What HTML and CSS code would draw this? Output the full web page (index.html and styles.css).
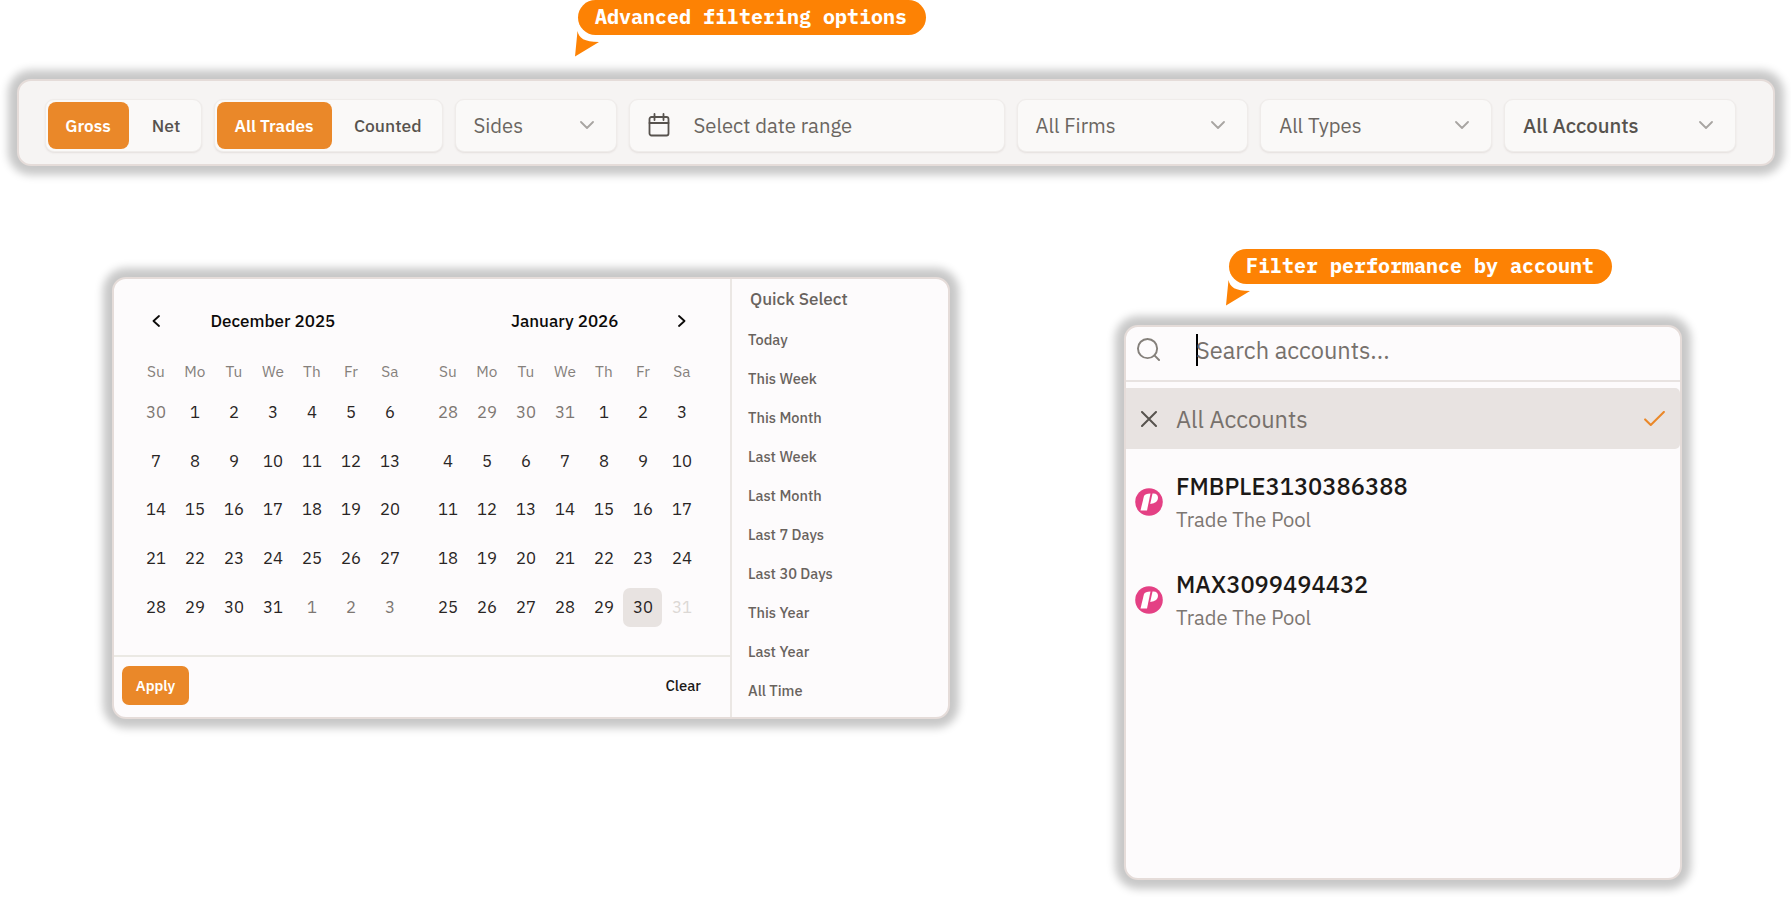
FILE: index.html
```html
<!DOCTYPE html>
<html lang="en">
<head>
    <meta charset="UTF-8">
    <meta name="viewport" content="width=device-width, initial-scale=1.0">
    <title>Trade Filters</title>
    <link rel="stylesheet" href="styles.css">
</head>
<body>
    <div class="callout callout-filters">
        Advanced filtering options
        <svg class="callout-tail" width="24" height="26" viewBox="0 0 24 26"><path d="M2.5 0C4 7 9 11 24 11L0 25.500Z"/></svg>
    </div>

    <!-- Filter bar -->
    <div class="panel filter-bar">
        <div class="toggle toggle-pnl">
            <button class="toggle-btn active">Gross</button>
            <button class="toggle-btn">Net</button>
        </div>
        <div class="toggle toggle-trades">
            <button class="toggle-btn active">All Trades</button>
            <button class="toggle-btn">Counted</button>
        </div>
        <div class="select select-sides"><span>Sides</span><svg class="chevron" viewBox="0 0 14 8"><path d="M1 1l6 6 6-6"/></svg></div>
        <div class="select select-date">
            <svg class="calendar-icon" width="22" height="24" viewBox="0 0 22 24"><rect x="1.500" y="4" width="19" height="18.500" rx="2"/><path d="M6.500 1v6M15.500 1v6M1.500 10h19"/></svg>
            <span>Select date range</span>
        </div>
        <div class="select select-wide"><span>All Firms</span><svg class="chevron" viewBox="0 0 14 8"><path d="M1 1l6 6 6-6"/></svg></div>
        <div class="select select-wide"><span>All Types</span><svg class="chevron" viewBox="0 0 14 8"><path d="M1 1l6 6 6-6"/></svg></div>
        <div class="select select-wide select-accounts"><span>All Accounts</span><svg class="chevron" viewBox="0 0 14 8"><path d="M1 1l6 6 6-6"/></svg></div>
    </div>

    <div class="columns">
        <!-- Date range picker -->
        <div class="panel date-picker">
            <div class="picker-main">
                <div class="months">
                    <div class="month">
                        <div class="month-header">
                            <svg class="arrow" viewBox="0 0 8 12"><path d="M7 1L1.500 6 7 11"/></svg>
                            <h2 class="title-december">December 2025</h2>
                        </div>
                        <div class="weekdays"></div>
                        <div class="days" id="december"></div>
                    </div>
                    <div class="month">
                        <div class="month-header">
                            <h2 class="title-january">January 2026</h2>
                            <svg class="arrow" viewBox="0 0 8 12"><path d="M1 1l5.500 5L1 11"/></svg>
                        </div>
                        <div class="weekdays"></div>
                        <div class="days" id="january"></div>
                    </div>
                </div>
                <div class="picker-footer">
                    <button class="apply-btn">Apply</button>
                    <button class="clear-btn">Clear</button>
                </div>
            </div>
            <div class="quick-select">
                <h3>Quick Select</h3>
                <ul>
                    <li>Today</li>
                    <li>This Week</li>
                    <li>This Month</li>
                    <li>Last Week</li>
                    <li>Last Month</li>
                    <li>Last 7 Days</li>
                    <li>Last 30 Days</li>
                    <li>This Year</li>
                    <li>Last Year</li>
                    <li>All Time</li>
                </ul>
            </div>
        </div>

        <!-- Account dropdown -->
        <div class="accounts">
            <div class="callout callout-accounts">
                Filter performance by account
                <svg class="callout-tail" width="24" height="26" viewBox="0 0 24 26"><path d="M2.500 0C4 7 9 11 24 11L0 25.500Z"/></svg>
            </div>
            <div class="panel account-menu">
                <div class="search">
                    <svg class="search-icon" viewBox="0 0 24 24"><circle cx="11" cy="11" r="10"/><path d="M18.200 18.200L23 23"/></svg>
                    <span class="caret"></span>
                    <span class="search-text">Search accounts...</span>
                </div>
                <div class="all-accounts">
                    <svg class="close-icon" viewBox="0 0 16 16"><path d="M1 1l14 14M15 1L1 15"/></svg>
                    <span>All Accounts</span>
                    <svg class="check-icon" viewBox="0 0 22 16"><path d="M1 9l6 6L21 1"/></svg>
                </div>
                <div class="account">
                    <svg class="firm-logo" viewBox="0 0 28 28"><circle cx="14" cy="14" r="13.800"/><path d="M9 8Q10 5.500 15.500 5.500L12 22.500H5.500Z"/><path d="M17.500 5.500Q23 5 23 10T15.200 16Z"/></svg>
                    <div>
                        <div class="account-name">FMBPLE3130386388</div>
                        <div class="account-firm">Trade The Pool</div>
                    </div>
                </div>
                <div class="account">
                    <svg class="firm-logo" viewBox="0 0 28 28"><circle cx="14" cy="14" r="13.800"/><path d="M9 8Q10 5.500 15.500 5.500L12 22.500H5.500Z"/><path d="M17.500 5.500Q23 5 23 10T15.200 16Z"/></svg>
                    <div>
                        <div class="account-name">MAX3099494432</div>
                        <div class="account-firm">Trade The Pool</div>
                    </div>
                </div>
            </div>
        </div>
    </div>
    <script src="script.js"></script>
</body>
</html>
```
FILE: styles.css
```css
* {
    box-sizing: border-box;
}

body {
    margin: 0;
    width: 1791px;
    height: 897px;
    overflow: hidden;
    background-color: #ffffff;
    font-family: "IBM Plex Sans", "Noto Sans", sans-serif;
    color: #1c1917;
}

h2, h3, ul {
    margin: 0;
    padding: 0;
}

button {
    border: none;
    background: none;
    padding: 0;
    font-family: inherit;
    cursor: pointer;
}

svg {
    display: block;
    flex: none;
    fill: none;
    stroke-linecap: round;
    stroke-linejoin: round;
}

.panel {
    border: 2px solid #e5dcd9;
    border-radius: 14px;
    background-color: #fdfbfc;
    box-shadow: 0 0 9px 9px #c8c8c8;
}

/* Orange speech labels */
.callout {
    position: relative;
    height: 35px;
    border-radius: 18px;
    padding-left: 17px;
    background-color: #fd8204;
    color: #ffffff;
    font-family: "IBM Plex Mono", "Liberation Mono", monospace;
    font-size: 20px;
    font-weight: bold;
    line-height: 34px;
    white-space: nowrap;
}

.callout-tail {
    position: absolute;
    left: -3.5px;
    top: 31px;
    fill: #fd8204;
}

.callout-filters {
    width: 347.5px;
    margin-left: 578px;
}

.callout-accounts {
    width: 382.5px;
    margin-left: 105px;
}

/* Filter bar */
.filter-bar {
    display: flex;
    align-items: flex-start;
    gap: 12px;
    width: 1758px;
    height: 87px;
    margin: 44px 0 0 17px;
    padding: 18px 0 0 26px;
    background-color: #f6f4f3;
}

.toggle, .select {
    display: flex;
    align-items: center;
    height: 53px;
    border: 1px solid #efecea;
    border-radius: 9px;
    background-color: #faf9f8;
    box-shadow: 0 1px 2px rgba(80, 50, 40, 0.1);
}

.toggle {
    padding: 2px;
}

.toggle-pnl {
    width: 157px;
}

.toggle-trades {
    width: 228.5px;
}

.toggle-btn {
    flex: 1;
    height: 47px;
    padding-left: 4px;
    border-radius: 8px;
    color: #57534e;
    font-size: 17.5px;
    font-weight: 500;
}

.toggle-btn.active {
    flex: none;
    width: 81px;
    padding: 0 1px 0 0;
    background-color: #ea8829;
    color: #ffffff;
    font-size: 17.1px;
    font-weight: 600;
}

.toggle-trades .active {
    width: 115px;
}

.select {
    justify-content: space-between;
    padding: 0 22px 0 18px;
    color: #6b6661;
    font-size: 20.3px;
}

.select-sides {
    width: 162px;
}

.select-date {
    justify-content: flex-start;
    gap: 24px;
    width: 376px;
}

.select-wide {
    width: 231.7px;
}

.select-accounts {
    color: #57534e;
    font-weight: 500;
}

.chevron {
    width: 14px;
    height: 8px;
    margin-bottom: 2px;
    stroke: #a8a5a2;
    stroke-width: 1.8;
}

.calendar-icon {
    margin-bottom: 2px;
    stroke: #57534e;
    stroke-width: 1.8;
}

.columns {
    display: flex;
    align-items: flex-start;
    padding-left: 112px;
}

/* Date range picker */
.date-picker {
    display: flex;
    width: 838px;
    height: 442px;
    margin-top: 111px;
}

.picker-main {
    display: flex;
    flex-direction: column;
    width: 618px;
    border-right: 2px solid #ebe7e4;
}

.months {
    display: flex;
    gap: 19px;
    height: 378px;
    padding: 29px 0 0 22.4px;
    border-bottom: 2px solid #ebe9e4;
}

.month {
    width: 273px;
}

.month-header {
    display: flex;
    align-items: center;
    height: 26px;
}

.month-header h2 {
    color: #0c0a09;
    font-size: 17px;
    font-weight: 500;
}

.arrow {
    width: 8px;
    height: 12px;
    margin-left: 15.5px;
    stroke: #0c0a09;
    stroke-width: 1.8;
}

.title-december {
    margin-left: 50.6px;
}

.title-january {
    width: 107px;
    margin-left: 82.5px;
    white-space: nowrap;
}

.title-january + .arrow {
    margin-left: 60px;
}

.weekdays, .days {
    display: grid;
    grid-template-columns: repeat(7, 39px);
    text-align: center;
}

.weekdays {
    height: 36px;
    margin-top: 19px;
    line-height: 36px;
    color: #85807b;
    font-size: 15.4px;
}

.days {
    row-gap: 9.7px;
    margin-top: 4px;
    color: #292524;
    font-size: 16.7px;
    line-height: 39px;
}

.day {
    height: 39px;
    border-radius: 7px;
}

.day.outside {
    color: #7d7772;
}

.day.selected {
    background-color: #e8e3e1;
}

.day.disabled {
    color: #dcd8d5;
}

.picker-footer {
    display: flex;
    align-items: center;
    justify-content: space-between;
    padding: 9px 29px 0 8px;
}

.apply-btn {
    width: 67px;
    height: 39px;
    border-radius: 7px;
    background-color: #ea8829;
    color: #ffffff;
    font-size: 14.7px;
    font-weight: 600;
}

.clear-btn {
    color: #1c1917;
    font-size: 14.8px;
    font-weight: 500;
}

.quick-select {
    padding: 6px 0 0 16px;
    color: #69635e;
}

.quick-select h3 {
    padding-left: 2px;
    font-size: 17.1px;
    font-weight: 500;
    line-height: 28px;
}

.quick-select ul {
    margin-top: 7px;
    list-style: none;
    font-size: 14.6px;
    font-weight: 500;
    line-height: 39px;
}

/* Account dropdown */
.accounts {
    margin: 83px 0 0 174px;
}

.account-menu {
    width: 558px;
    height: 555px;
    margin-top: 41px;
}

.search {
    display: flex;
    align-items: center;
    height: 55px;
    padding: 0 0 8px 11px;
    border-bottom: 2px solid #e8e3e1;
    color: #77716c;
    font-size: 23.6px;
}

.search-icon {
    width: 23px;
    height: 23px;
    stroke: #85807b;
    stroke-width: 2;
}

.caret {
    width: 2px;
    height: 32px;
    margin: 0 -2px 0 36px;
    background-color: #000000;
}

.all-accounts {
    display: flex;
    align-items: center;
    height: 61px;
    margin-top: 6px;
    padding: 0 15px 0 14px;
    border-radius: 0 5px 5px 0;
    background-color: #e8e3e1;
    color: #77716c;
    font-size: 23.6px;
}

.close-icon {
    width: 16px;
    height: 16px;
    margin: 0 19.5px 0 0.5px;
    stroke: #57534e;
    stroke-width: 2;
}

.check-icon {
    width: 21px;
    height: 15px;
    margin-left: auto;
    stroke: #ea8829;
    stroke-width: 2.2;
}

.account {
    display: flex;
    align-items: center;
    gap: 13px;
    height: 98px;
    padding: 9px 0 0 9px;
}

.firm-logo {
    width: 28px;
    height: 28px;
    margin-bottom: 2px;
    fill: #ffffff;
}

.firm-logo circle {
    fill: #e44084;
}

.account-name {
    color: #1c1917;
    font-size: 23.7px;
    font-weight: 500;
    line-height: 34px;
}

.account-firm {
    color: #7d7772;
    font-size: 20.2px;
    line-height: 32px;
}
```
FILE: script.js
```js
const weekdays = ['Su', 'Mo', 'Tu', 'We', 'Th', 'Fr', 'Sa'];

document.querySelectorAll('.weekdays').forEach((row) => {
    row.innerHTML = weekdays.map((name) => `<span>${name}</span>`).join('');
});

// Fill five weeks of a month, start is the first Sunday shown
function fillMonth(id, year, month, start) {
    const grid = document.getElementById(id);
    for (let i = 0; i < 35; i++) {
        const date = new Date(year, month, start + i);
        const day = document.createElement('span');
        day.className = 'day';
        day.textContent = date.getDate();
        if (date.getMonth() !== month) {
            day.classList.add('outside');
        } else if (id === 'january' && date.getDate() === 30) {
            day.classList.add('selected');
        } else if (id === 'january' && date.getDate() === 31) {
            day.classList.add('disabled');
        }
        grid.appendChild(day);
    }
}

fillMonth('december', 2025, 11, 0);
fillMonth('january', 2026, 0, -3);
```
